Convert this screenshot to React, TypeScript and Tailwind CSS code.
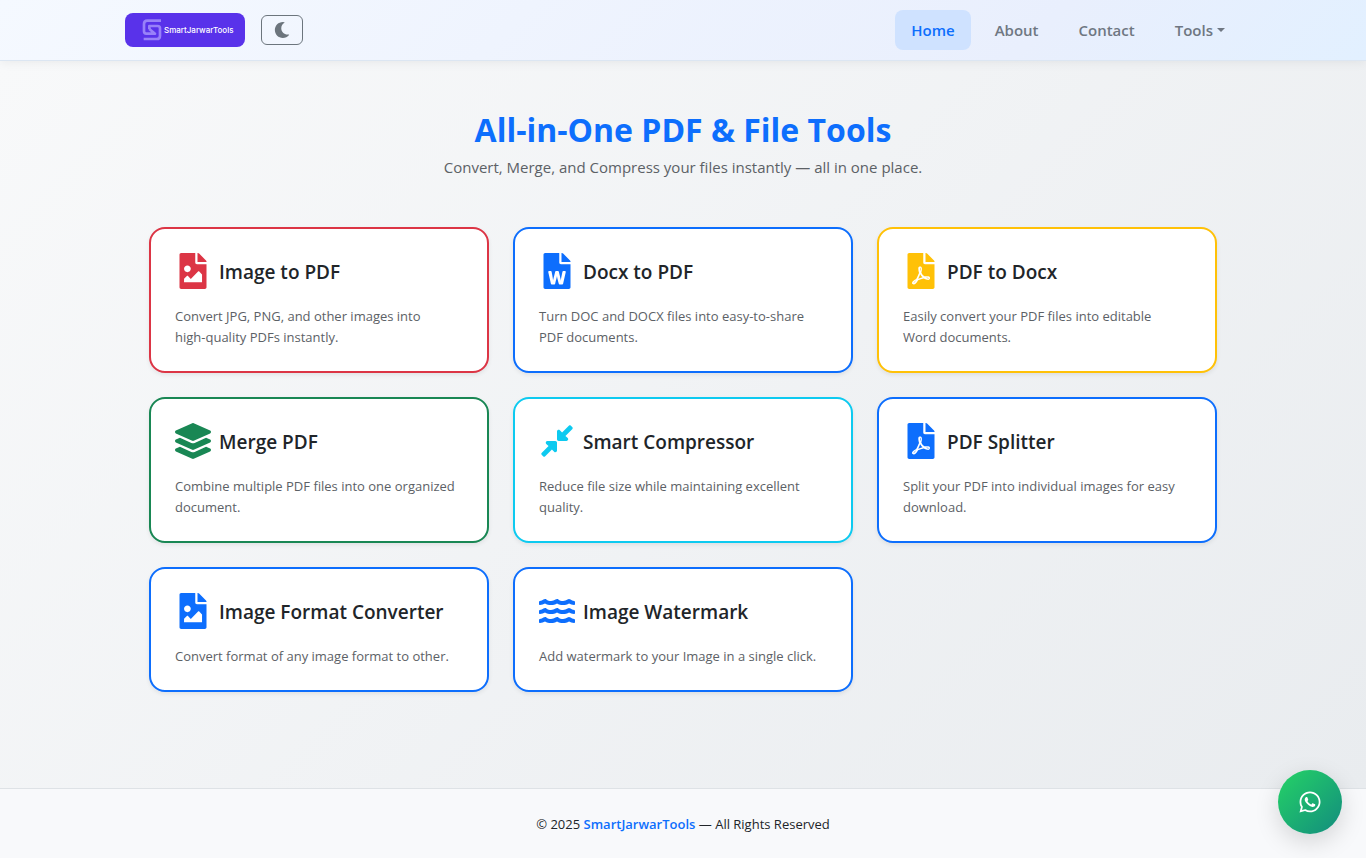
import React from "react";
import type { IconType } from "react-icons";
import {
  FaCompressAlt,
  FaFileImage,
  FaFilePdf,
  FaFileWord,
  FaLayerGroup,
  FaMoon,
  FaWater,
  FaWhatsapp,
} from "react-icons/fa";

type Tool = {
  title: string;
  text: string;
  icon: IconType;
  border: string;
  color: string;
};

const blue = { border: "border-[#0d6efd]", color: "text-[#0d6efd]" };

const tools: Tool[] = [
  {
    title: "Image to PDF",
    text: "Convert JPG, PNG, and other images into\nhigh-quality PDFs instantly.",
    icon: FaFileImage,
    border: "border-[#dc3545]",
    color: "text-[#dc3545]",
  },
  {
    title: "Docx to PDF",
    text: "Turn DOC and DOCX files into easy-to-share\nPDF documents.",
    icon: FaFileWord,
    ...blue,
  },
  {
    title: "PDF to Docx",
    text: "Easily convert your PDF files into editable\nWord documents.",
    icon: FaFilePdf,
    border: "border-[#ffc107]",
    color: "text-[#ffc107]",
  },
  {
    title: "Merge PDF",
    text: "Combine multiple PDF files into one organized document.",
    icon: FaLayerGroup,
    border: "border-[#198754]",
    color: "text-[#198754]",
  },
  {
    title: "Smart Compressor",
    text: "Reduce file size while maintaining excellent quality.",
    icon: FaCompressAlt,
    border: "border-[#0dcaf0]",
    color: "text-[#0dcaf0]",
  },
  {
    title: "PDF Splitter",
    text: "Split your PDF into individual images for easy download.",
    icon: FaFilePdf,
    ...blue,
  },
  {
    title: "Image Format Converter",
    text: "Convert format of any image format to other.",
    icon: FaFileImage,
    ...blue,
  },
  {
    title: "Image Watermark",
    text: "Add watermark to your Image in a single click.",
    icon: FaWater,
    ...blue,
  },
];

function Logo() {
  return (
    <a
      href="#home"
      className="flex h-[34px] w-[120px] items-center gap-0.5 rounded-lg bg-[#5932ea] pl-[17px]"
    >
      <svg viewBox="0 0 58 66" className="h-[22px] w-5" fill="none" aria-hidden="true">
        <g stroke="#9881f8" strokeWidth="8" strokeLinejoin="round">
          <path d="M56 5H15Q5 5 5 15V37Q5 44 12 44H38L21 30" />
          <path d="M4 60H43Q53 60 53 50V28Q53 21 46 21H21V31" />
        </g>
      </svg>
      <span className="font-['Inter',sans-serif] text-[8px] leading-none font-medium text-white">
        SmartJarwarTools
      </span>
    </a>
  );
}

function Header() {
  const link = "rounded-lg px-4 py-2 text-[15px] leading-6 font-semibold";
  return (
    <header className="relative border-b border-[#dce6f2] bg-[linear-gradient(135deg,#f5f9ff_0%,#e9effd_75%,#e2f0ff_100%)] shadow-[0_2px_10px_rgba(0,0,0,0.06)]">
      <div className="mx-auto flex h-[60px] max-w-[1140px] items-center gap-4 px-3">
        <Logo />
        <button
          type="button"
          aria-label="Toggle dark mode"
          className="flex h-[30px] w-[42px] items-center justify-center rounded-md border border-[#6c757d] text-[#6c757d]"
        >
          <FaMoon className="size-4" />
        </button>
        <nav className="ml-auto flex gap-2 text-[#6f7782]">
          <a href="#home" className={`${link} bg-[#cfe2ff] text-[#0d6efd]`}>
            Home
          </a>
          <a href="#about" className={link}>
            About
          </a>
          <a href="#contact" className={link}>
            Contact
          </a>
          <button type="button" className={`${link} flex items-center gap-1`}>
            Tools
            <svg viewBox="0 0 8 4" className="h-1 w-2" fill="currentColor" aria-hidden="true">
              <path d="M0 0h8L4 4z" />
            </svg>
          </button>
        </nav>
      </div>
    </header>
  );
}

function ToolCard({ title, text, icon: Icon, border, color }: Tool) {
  return (
    <a
      href="#tool"
      className={`block rounded-2xl border-2 bg-white px-6 pt-6 pb-[23px] shadow-[0_2px_4px_rgba(0,0,0,0.075)] ${border}`}
    >
      <div className="mb-[17px] flex items-center gap-2">
        <Icon className={`size-9 ${color}`} aria-hidden="true" />
        <h2 className="pt-0.5 text-[19px] leading-6 font-semibold text-[#212529]">{title}</h2>
      </div>
      <p className="text-[13px] leading-[21px] whitespace-pre-line text-[#5c6166]">{text}</p>
    </a>
  );
}

export default function App() {
  return (
    <div className="flex min-h-screen flex-col font-['Open_Sans',sans-serif] text-[#212529]">
      <Header />
      <main className="grow bg-[linear-gradient(135deg,#f8f9fa,#e9ecef)]">
        <div className="mx-auto max-w-[1140px] px-9 py-12">
          <div className="mb-12 text-center">
            <h1 className="mb-1 text-[32px] leading-[42px] font-bold text-[#0d6efd]">
              All-in-One PDF &amp; File Tools
            </h1>
            <p className="text-[15px] leading-6 text-[#5c6166]">
              Convert, Merge, and Compress your files instantly — all in one place.
            </p>
          </div>
          <div className="grid gap-6 md:grid-cols-2 lg:grid-cols-3">
            {tools.map((tool) => (
              <ToolCard key={tool.title} {...tool} />
            ))}
          </div>
        </div>
      </main>
      <footer className="border-t border-[#dee2e6] bg-[#f8f9fb] pt-[25px] pb-[23px] text-center text-[13px] leading-[21px]">
        © 2025{" "}
        <a href="#home" className="font-semibold text-[#0d6efd]">
          SmartJarwarTools
        </a>{" "}
        — All Rights Reserved
      </footer>
      <a
        href="#whatsapp"
        aria-label="Chat on WhatsApp"
        className="fixed right-6 bottom-6 flex size-16 items-center justify-center rounded-full bg-[linear-gradient(135deg,#25d366,#128c7e)] text-white shadow-[0_8px_24px_rgba(0,0,0,0.15)]"
      >
        <FaWhatsapp className="size-6" />
      </a>
    </div>
  );
}
